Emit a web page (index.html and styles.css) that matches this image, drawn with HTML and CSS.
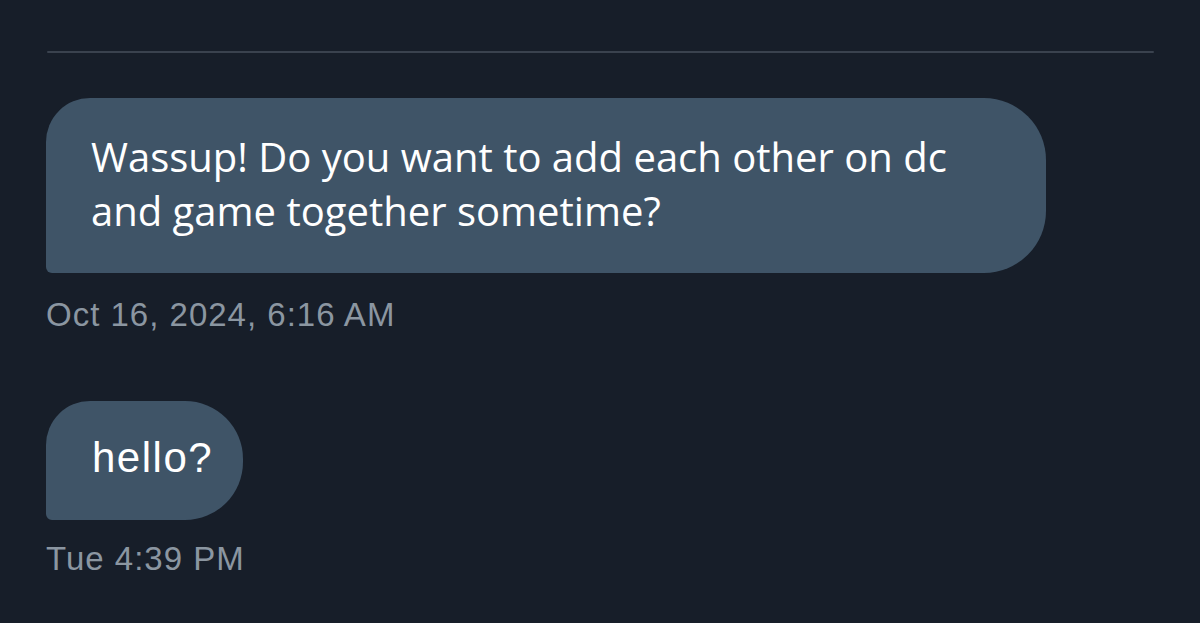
FILE: index.html
```html
<!DOCTYPE html>
<html>
<head>
<meta charset="utf-8">
<link rel="stylesheet" href="styles.css">
</head>
<body>
<div class="page">
  <div class="divider"></div>
  <div class="thread">
    <div class="msg">
      <div class="bubble wide">Wassup! Do you want to add each other on dc and game together sometime?</div>
      <div class="time">Oct 16, 2024, 6:16 AM</div>
    </div>
    <div class="msg second">
      <div class="bubble small">hello?</div>
      <div class="time">Tue 4:39 PM</div>
    </div>
  </div>
</div>
</body>
</html>
```
FILE: styles.css
```css
html, body {
  margin: 0;
  padding: 0;
  background: #171e29;
}
.page {
  width: 1200px;
  height: 623px;
  overflow: hidden;
  background: #171e29;
  font-family: "Open Sans", "Liberation Sans", sans-serif;
}
.divider {
  margin: 51px 46px 0 47px;
  height: 2px;
  background: #3a424e;
  border-radius: 1px;
}
.thread {
  display: flex;
  flex-direction: column;
  padding: 45px 0 0 46px;
}
.msg {
  display: flex;
  flex-direction: column;
  align-items: flex-start;
}
.msg.second {
  margin-top: 68px;
}
.bubble {
  background: #3f5467;
  color: #ffffff;
  box-sizing: border-box;
}
.bubble.wide {
  width: 1000px;
  height: 175px;
  padding: 32px 80px 0 45px;
  font-size: 40px;
  line-height: 54px;
  border-radius: 44px 62px 62px 6px;
}
.bubble.small {
  width: 197px;
  height: 119px;
  padding: 0 0 6px 46px;
  display: flex;
  align-items: center;
  font-family: "Liberation Sans", Arial, sans-serif;
  font-size: 42px;
  letter-spacing: 1.5px;
  border-radius: 44px 58px 58px 6px;
}
.time {
  color: #8b96a1;
  font-family: "Liberation Sans", Arial, sans-serif;
  font-size: 33px;
  letter-spacing: 1px;
  margin-top: 24px;
  line-height: 36px;
}
.msg.second .time {
  margin-top: 21px;
}
```
